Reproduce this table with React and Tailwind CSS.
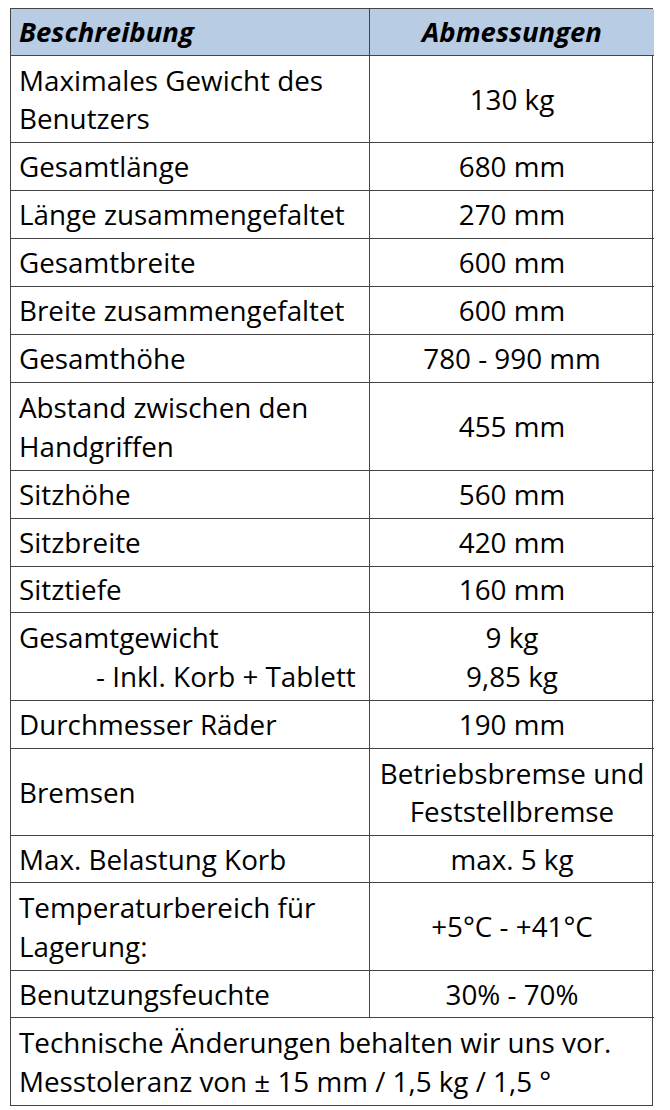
const rows = [
  { label: ['Maximales Gewicht des', 'Benutzers'], value: ['130 kg'], h: 'h-[87px]' },
  { label: ['Gesamtlänge'], value: ['680 mm'], h: 'h-[48px]' },
  { label: ['Länge zusammengefaltet'], value: ['270 mm'], h: 'h-[48px]' },
  { label: ['Gesamtbreite'], value: ['600 mm'], h: 'h-[48px]' },
  { label: ['Breite zusammengefaltet'], value: ['600 mm'], h: 'h-[48px]' },
  { label: ['Gesamthöhe'], value: ['780 - 990 mm'], h: 'h-[48px]' },
  { label: ['Abstand zwischen den', 'Handgriffen'], value: ['455 mm'], h: 'h-[88px]' },
  { label: ['Sitzhöhe'], value: ['560 mm'], h: 'h-[48px]' },
  { label: ['Sitzbreite'], value: ['420 mm'], h: 'h-[48px]' },
  { label: ['Sitztiefe'], value: ['160 mm'], h: 'h-[46px]' },
  { label: ['Gesamtgewicht', '- Inkl. Korb + Tablett'], value: ['9 kg', '9,85 kg'], h: 'h-[88px]', indent: true },
  { label: ['Durchmesser Räder'], value: ['190 mm'], h: 'h-[48px]' },
  { label: ['Bremsen'], value: ['Betriebsbremse und', 'Feststellbremse'], h: 'h-[87px]' },
  { label: ['Max. Belastung Korb'], value: ['max. 5 kg'], h: 'h-[47px]' },
  { label: ['Temperaturbereich für', 'Lagerung:'], value: ['+5°C - +41°C'], h: 'h-[88px]' },
  { label: ['Benutzungsfeuchte'], value: ['30% - 70%'], h: 'h-[47px]' },
];

const cell = 'border-[#444] flex flex-col justify-center';

export default function App() {
  return (
    <div className="w-[670px] h-[1110px] bg-white pt-[8px] pl-[10px]" style={{ fontFamily: '"Open Sans", "Noto Sans", sans-serif' }}>
      <div className="w-[643px] grid grid-cols-[359px_284px] border border-[#444] text-black text-[27.8px] leading-[38.5px] whitespace-nowrap">
        <div className={`${cell} h-[47px] border-r border-b bg-[#b8cce4] pl-[8px]`}>
          <span className="font-bold italic text-[27.5px]">Beschreibung</span>
        </div>
        <div className={`${cell} h-[47px] border-b bg-[#b8cce4] items-center`}>
          <span className="font-bold italic text-[27.5px]">Abmessungen</span>
        </div>
        {rows.map((r, i) => (
          <div key={i} className="contents">
            <div className={`${cell} ${r.h} border-r border-b pl-[8px]`}>
              {r.label.map((t, j) => (
                <span key={j} className={r.indent && j === 1 ? 'pl-[77px]' : ''}>{t}</span>
              ))}
            </div>
            <div className={`${cell} ${r.h} border-b items-center text-center`}>
              {r.value.map((t, j) => (
                <span key={j}>{t}</span>
              ))}
            </div>
          </div>
        ))}
        <div className={`${cell} col-span-2 h-[87px] pl-[8px]`}>
          <span>Technische Änderungen behalten wir uns vor.</span>
          <span>Messtoleranz von ± 15 mm / 1,5 kg / 1,5 °</span>
        </div>
      </div>
    </div>
  );
}
